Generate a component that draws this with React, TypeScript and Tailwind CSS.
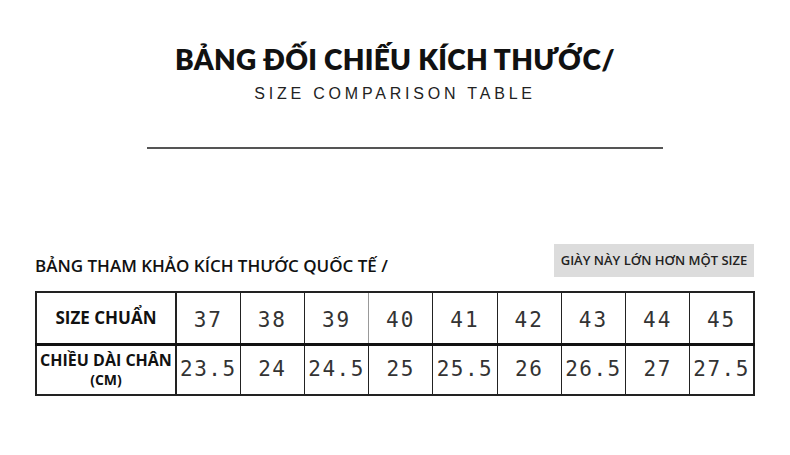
const sizes = ['37', '38', '39', '40', '41', '42', '43', '44', '45'];
const lengths = ['23.5', '24', '24.5', '25', '25.5', '26', '26.5', '27', '27.5'];

export default function App() {
  return (
    <div className="w-[790px] h-[455px] bg-white overflow-hidden flex flex-col items-center font-['Open_Sans',sans-serif] text-[#111]">
      {/* Header */}
      <h1 className="mt-[42px] text-[28px] leading-[34px] font-extrabold tracking-[0.3px] font-['Lato',sans-serif]">
        BẢNG ĐỐI CHIẾU KÍCH THƯỚC/
      </h1>
      <div className="mt-[8px] text-[16px] leading-[20px] tracking-[3.8px] text-[#222] font-['Liberation_Sans',sans-serif]">
        SIZE COMPARISON TABLE
      </div>
      <div className="mt-[43px] ml-[20px] w-[516px] h-[2px] bg-[#555]" />

      {/* Table section */}
      <div className="mt-[95px] w-[720px] flex items-end justify-between">
        <div className="text-[17px] leading-[22px] font-semibold">
          BẢNG THAM KHẢO KÍCH THƯỚC QUỐC TẾ /
        </div>
        <div className="w-[200px] h-[33px] bg-[#dcdcdc] flex items-center justify-center text-[13px] font-semibold text-[#222] mr-[1px]">
          GIÀY NÀY LỚN HƠN MỘT SIZE
        </div>
      </div>

      <table className="mt-[14px] w-[720px] border-collapse border-2 border-[#222] table-fixed">
        <colgroup>
          <col className="w-[140px]" />
          {sizes.map((s) => (
            <col key={s} />
          ))}
        </colgroup>
        <tbody>
          <tr className="h-[52px] border-b-[3px] border-[#111]">
            <td className="text-center text-[17px] font-bold border-r-2 border-[#222]">SIZE CHUẨN</td>
            {sizes.map((s, i) => (
              <td
                key={s}
                className={`text-center text-[21px] tracking-[2px] text-[#333] font-['DejaVu_Sans_Mono',monospace] border-r-[1.5px] pt-[6px] ${
                  i === 2 ? 'border-[#999]' : 'border-[#222]'
                }`}
              >
                {s}
              </td>
            ))}
          </tr>
          <tr className="h-[51px]">
            <td className="text-center text-[16px] leading-[19px] font-bold border-r-2 border-[#222]">
              CHIỀU DÀI CHÂN
              <br />
              <span className="text-[14px]">(CM)</span>
            </td>
            {lengths.map((l) => (
              <td
                key={l}
                className="text-center text-[21px] tracking-[1.5px] text-[#333] font-['DejaVu_Sans_Mono',monospace] border-r-[1.5px] border-[#222]"
              >
                {l}
              </td>
            ))}
          </tr>
        </tbody>
      </table>
    </div>
  );
}
